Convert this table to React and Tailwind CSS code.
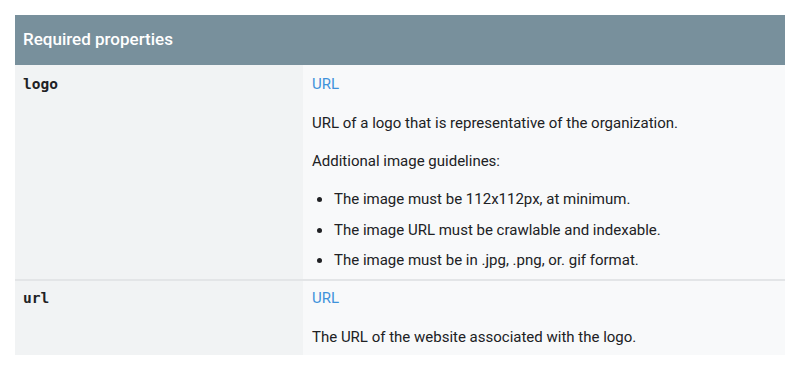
import React from 'react';

const rows = [
    {
        name: 'logo',
        content: (
            <>
                <p className="text-[#3f92da]">URL</p>
                <p className="mt-[17px]">URL of a logo that is representative of the organization.</p>
                <p className="mt-[16px]">Additional image guidelines:</p>
                <ul className="mt-[16px] ml-[21px] list-disc space-y-[8.5px] marker:text-[#202124]">
                    <li className="pl-[1px]">The image must be 112x112px, at minimum.</li>
                    <li className="pl-[1px]">The image URL must be crawlable and indexable.</li>
                    <li className="pl-[1px]">The image must be in .jpg, .png, or. gif format.</li>
                </ul>
            </>
        ),
    },
    {
        name: 'url',
        content: (
            <>
                <p className="text-[#3f92da]">URL</p>
                <p className="mt-[17px]">The URL of the website associated with the logo.</p>
            </>
        ),
    },
];

const App = () => {
    return (
        <div className="w-[800px] h-[370px] bg-white pt-[15px] px-[15px]" style={{ fontFamily: 'Roboto, sans-serif' }}>
            <div className="w-[770px]">
                <div className="h-[50px] bg-[#78909c] flex items-center px-[8px]">
                    <span className="text-white text-[17px] font-medium">Required properties</span>
                </div>
                {rows.map((row, i) => (
                    <div key={row.name} className={`flex ${i > 0 ? 'border-t-2 border-[#e3e5e7]' : ''}`}>
                        <div className={`w-[288px] bg-[#f1f3f4] px-[8px] ${i > 0 ? 'pt-[6px]' : 'pt-[8px]'}`}>
                            <code className="block text-[14.5px] leading-[22px] font-bold text-[#202124]" style={{ fontFamily: '"DejaVu Sans Mono", monospace' }}>
                                {row.name}
                            </code>
                        </div>
                        <div className={`flex-1 bg-[#f8f9fa] px-[9px] text-[15px] leading-[22px] text-[#202124] ${i > 0 ? 'pt-[6px] pb-[7px]' : 'pt-[8px] pb-[8px]'}`}>
                            {row.content}
                        </div>
                    </div>
                ))}
            </div>
        </div>
    );
};

export default App;
